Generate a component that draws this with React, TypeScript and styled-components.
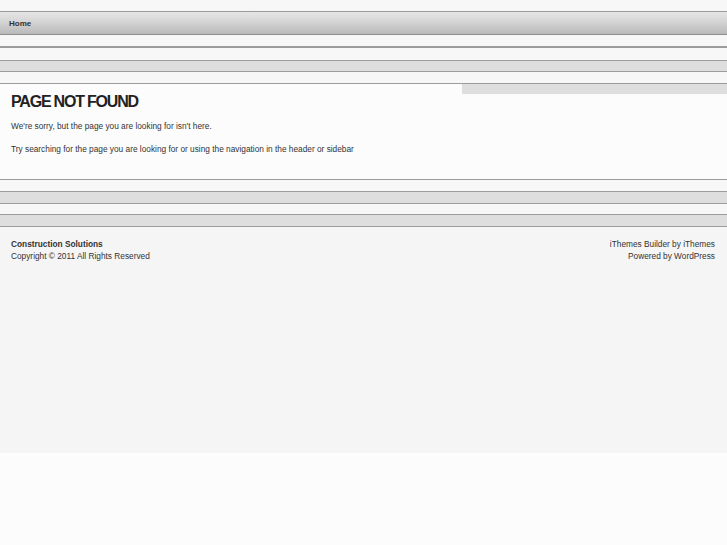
import styled, { createGlobalStyle } from 'styled-components';

const GlobalStyle = createGlobalStyle`
  html, body {
    margin: 0;
    padding: 0;
    background: #fcfcfc;
  }
  body {
    font-family: "Liberation Sans", Arial, Helvetica, sans-serif;
    font-size: 8.3px;
    color: #333;
  }
`;

type BandKind = 'light' | 'gray';

const Band = styled.div<{ $kind?: BandKind; $h: number; $top?: number; $bottom?: number }>`
  height: ${(p) => p.$h}px;
  background: ${(p) => (p.$kind === 'gray' ? '#dedede' : '#f7f7f7')};
  border-top: ${(p) => (p.$top ? `${p.$top}px solid #9c9c9c` : 'none')};
  border-bottom: ${(p) => (p.$bottom ? `${p.$bottom}px solid #9c9c9c` : 'none')};
`;

const Page = styled.div`
  width: 100%;
  background: #f7f7f7;
  padding-top: 11px;
`;

const NavBar = styled.nav`
  height: 22px;
  border-top: 1px solid #9a9a9a;
  border-bottom: 1px solid #8e8e8e;
  background: linear-gradient(#e6e6e6, #d4d4d4 45%, #b9b9b9);
  display: flex;
  align-items: center;
  padding-left: 9px;
`;

const NavLink = styled.a`
  font-weight: bold;
  font-size: 8px;
  color: #333;
  text-decoration: none;
`;

const Content = styled.div`
  display: grid;
  grid-template-columns: 462px 1fr;
  background: #fcfcfc;
  border-bottom: 1px solid #9c9c9c;
  height: 95px;
`;

const Main = styled.main`
  padding: 8px 11px 0;
`;

const Title = styled.h1`
  margin: 0 0 9px;
  font-size: 16px;
  line-height: 20px;
  font-weight: bold;
  letter-spacing: -1.2px;
  color: #222;
`;

const Para = styled.p`
  margin: 0 0 13px;
  font-size: 8.3px;
  line-height: 10px;
  color: #333;
`;

const Sidebar = styled.aside`
  align-self: start;
  height: 10px;
  background: #dedede;
`;

const Footer = styled.footer`
  background: #f5f5f5;
  height: 226px;
  padding: 11px 12px 0 11px;
  box-sizing: border-box;
  display: flex;
  justify-content: space-between;
`;

const FooterCol = styled.div<{ $right?: boolean }>`
  text-align: ${(p) => (p.$right ? 'right' : 'left')};
  font-size: 8.3px;
  line-height: 12px;
  color: #333;
`;

const Strong = styled.div`
  font-weight: bold;
`;

const Below = styled.div`
  height: 92px;
  background: #fcfcfc;
`;

export default function App() {
  return (
    <>
      <GlobalStyle />
      <Page>
        <NavBar>
          <NavLink href="#">Home</NavLink>
        </NavBar>
        <Band $h={11} />
        <Band $h={12} $top={2} $bottom={1} />
        <Band $kind="gray" $h={10} />
        <Band $h={11} $top={1} $bottom={1} />
        <Content>
          <Main>
            <Title>PAGE NOT FOUND</Title>
            <Para>We're sorry, but the page you are looking for isn't here.</Para>
            <Para>Try searching for the page you are looking for or using the navigation in the header or sidebar</Para>
          </Main>
          <Sidebar />
        </Content>
        <Band $h={11} />
        <Band $kind="gray" $h={11} $top={1} $bottom={1} />
        <Band $h={10} />
        <Band $kind="gray" $h={11} $top={1} $bottom={1} />
        <Footer>
          <FooterCol>
            <Strong>Construction Solutions</Strong>
            <div>Copyright © 2011 All Rights Reserved</div>
          </FooterCol>
          <FooterCol $right>
            <div>iThemes Builder by iThemes</div>
            <div>Powered by WordPress</div>
          </FooterCol>
        </Footer>
        <Below />
      </Page>
    </>
  );
}
